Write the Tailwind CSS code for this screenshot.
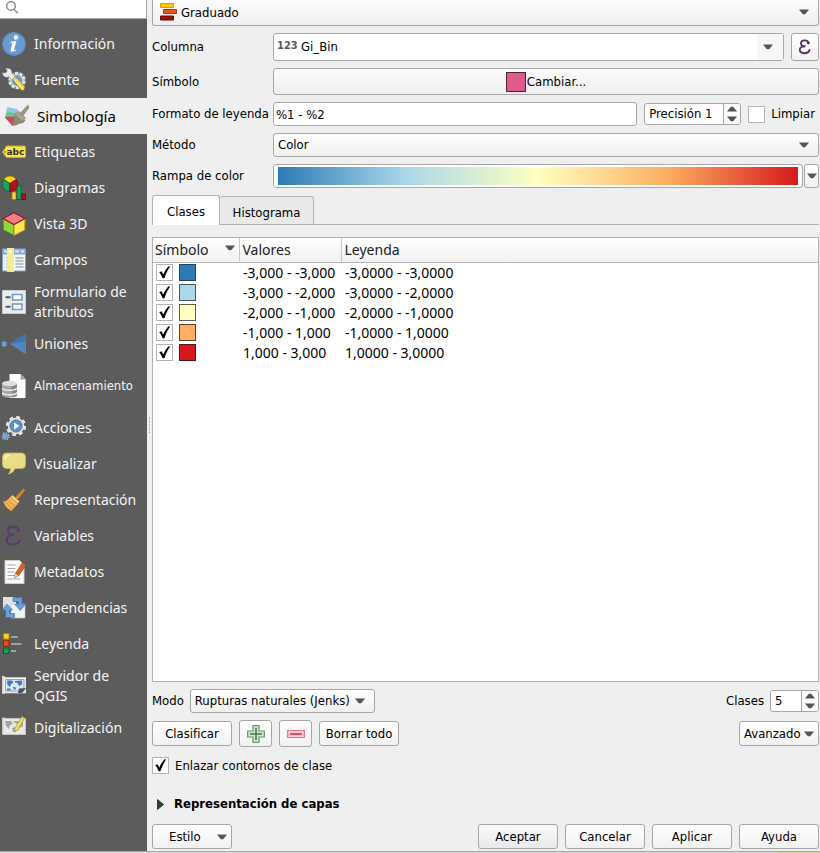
<!DOCTYPE html>
<html lang="es">
<head>
<meta charset="utf-8">
<meta name="viewport" content="width=device-width, initial-scale=1">
<title>Propiedades de la capa</title>
<script src="https://cdn.jsdelivr.net/npm/@tailwindcss/browser@4"></script>
</head>
<body class="flex min-h-screen flex-col bg-[#efefef] font-['DejaVu_Sans_Condensed','Noto_Sans',sans-serif] text-[13px] leading-4 text-black">
<svg class="hidden" aria-hidden="true">
  <symbol id="check" viewBox="0 0 17 17"><path d="M3.200 8.200l2.300-.9 1.800 3.200C8.800 7.200 10.300 4.400 12.600 2.300l1.500.3C11.600 6.200 9.900 9.800 8.400 14.300H6.600C5.800 11.800 4.700 9.900 3.200 8.200z" fill="#000"/></symbol>
  <symbol id="down" viewBox="0 0 10 6"><path d="M0 .5h10L6.200 5.200H3.800z" fill="#555"/></symbol>
  <symbol id="up" viewBox="0 0 10 6"><path d="M0 5.500h10L6.200.8H3.800z" fill="#555"/></symbol>
</svg>

<div class="flex flex-1">
  <!-- Sections -->
  <aside class="flex w-[147px] shrink-0 flex-col bg-[#5c5c5c] font-['Noto_Sans',sans-serif] text-[14px] leading-5 text-[#f4f4f4]">
    <label class="flex h-[19px] items-center border-r border-b border-[#a8a8a8] bg-white pl-[5px]">
      <svg class="h-4 w-4 shrink-0" viewBox="0 0 16 16" fill="none" stroke="#8a8a8a" stroke-width="1.400"><circle cx="6" cy="5" r="4.300"/><path d="M9 8.300l3.800 4"/></svg>
      <input type="search" aria-label="Buscar" class="h-4 w-full min-w-0 bg-transparent text-black outline-none">
    </label>
    <nav class="mt-[7px] flex flex-col">
      <a href="#" class="flex h-9 items-center gap-2 pr-2 pl-[2px]">
        <svg class="h-6 w-6 shrink-0" viewBox="0 0 24 24"><circle cx="12" cy="12" r="11.700" fill="#6a9bd3"/><circle cx="12" cy="12" r="11" fill="none" stroke="#5b8cc5"/><circle cx="14" cy="5.500" r="2.200" fill="#fff"/><path d="M8.500 9.800l6-.9-2.400 8.600c-.2.900.4.900 1.700.1l.3.600c-1.600 1.600-6 2.700-5.400-.4l1.600-6.300c.2-.8-.3-.9-1.800-.8z" fill="#fff"/></svg>
        <span>Información</span></a>
      <a href="#" class="flex h-9 items-center gap-2 pr-2 pl-[2px]">
        <svg class="h-6 w-6 shrink-0" viewBox="0 0 24 24"><circle cx="15" cy="12.500" r="6.500" fill="#6c9bd0"/><circle cx="15" cy="12.500" r="7.500" fill="none" stroke="#e4e4e4" stroke-width="2.400" stroke-dasharray="3.600 1.100"/><circle cx="15" cy="12.500" r="6" fill="none" stroke="#e4e4e4" stroke-width="1.200"/><path d="M.5 4.500c2.500 1 4.500.2 4.500-2L3.500.5C7.500-.5 10.500 1.700 9.800 5.500l3.500 3.300-3 3L6.800 8.900C3.500 10.300.5 8.500.5 4.500z" fill="#ececec" stroke="#777" stroke-width=".5"/><path d="M10.500 11.500l3-2.800 9.500 9.900-.8 3.400-2.600.6z" fill="#eed95f" stroke="#8e7d25" stroke-width=".7"/><path d="M12.500 12l7.500 8.300" stroke="#fff3a0" stroke-width="1"/></svg>
        <span>Fuente</span></a>
      <a href="#" aria-current="page" class="flex h-9 items-center gap-2 bg-[#efefef] pl-[5px] text-[15px] text-black">
        <svg class="h-6 w-6 shrink-0" viewBox="0 0 24 24"><path d="M2.500 3L13 5.500 11 10 1 8.500z" fill="#8cc4ea"/><path d="M1.500 8l9.500 1.500L13 14l-13-.8z" fill="#72c382"/><path d="M-.5 13l12-.5L14 17l-7 4.500z" fill="#cc4566"/><path d="M6 21.500c3.500-2 3-6 3-8.500l3-3.500 8.500 7-3 3c-3-1.500-5.500 3.500-11.500 2z" fill="#8b8873"/><path d="M10 10.500L13.500 7l7 7-3.500 3.500z" fill="#aaa690" stroke="#77745f" stroke-width=".6"/><path d="M15.500 9l7.200-7.800 2 1.600-6.700 8.700z" fill="#9a9781" stroke="#77745f" stroke-width=".5"/></svg>
        <span>Simbología</span></a>
      <a href="#" class="flex h-9 items-center gap-2 pr-2 pl-[2px]">
        <svg class="h-6 w-6 shrink-0" viewBox="0 0 24 24"><path d="M.5 12l4-6H22.500q1 0 1 1v9.500q0 1-1 1H4.500z" fill="#f7e24b" stroke="#c9ac25"/><circle cx="3" cy="12" r=".9" fill="#8a7418"/><text x="4.500" y="15" font-family="DejaVu Sans" font-weight="bold" font-size="9" fill="#333">abc</text></svg>
        <span>Etiquetas</span></a>
      <a href="#" class="flex h-9 items-center gap-2 pr-2 pl-[2px]">
        <svg class="h-6 w-6 shrink-0" viewBox="0 0 24 24"><g stroke-width=".8"><path d="M8 7.500L1.700 3.500A7.500 7.500 0 0 1 14.300 3.500z" fill="#fcd116" stroke="#997a00"/><path d="M8 7.500L1.700 3.500A7.500 7.500 0 0 0 8 15.500z" fill="#17a35a" stroke="#075c2e"/><path d="M8 7.500l6.300-4A7.500 7.500 0 0 1 8 15.500z" fill="#b31217" stroke="#6d0609"/><path d="M10 16h4v7.500h-4z" fill="#fcd04a" stroke="#a07a00"/><path d="M15 10h4v13.500h-4z" fill="#17a35a" stroke="#075c2e"/><path d="M20 18h3.500v5.500H20z" fill="#b31217" stroke="#6d0609"/></g></svg>
        <span>Diagramas</span></a>
      <a href="#" class="flex h-9 items-center gap-2 pr-2 pl-[2px]">
        <svg class="h-6 w-6 shrink-0" viewBox="0 0 24 24" stroke-linejoin="round"><path d="M1 6.500l11 6v11L1.200 18z" fill="#8fd63f" stroke="#478615"/><path d="M23 6.500l-11 6v11L22.800 18z" fill="#fce94f" stroke="#b39415"/><path d="M12 .7l11 5.800-11 6-11-6z" fill="#f08088" stroke="#a5131a" stroke-width="1.300"/></svg>
        <span>Vista 3D</span></a>
      <a href="#" class="flex h-9 items-center gap-2 pr-2 pl-[2px]">
        <svg class="h-6 w-6 shrink-0" viewBox="0 0 24 24"><path d="M.5 1h23v22H.5z" fill="#f2f4f7" stroke="#7da0c8"/><path d="M1 1.500h22v5H1z" fill="#84a9d3"/><path d="M13 3.500h4M19 3.500h3M2 3.500h3" stroke="#d8e6f5" stroke-width="2"/><path d="M2.500 10h19M2.500 13h19M2.500 16h19M2.500 19h19" stroke="#a9aeb5" stroke-width="1.300"/><path d="M3.500 7v15.500M12.500 7v15.500" stroke="#fff" stroke-width="1.500"/><path d="M5 0h7v24H5z" fill="#f3ec90"/><path d="M6.500 3.500h3" stroke="#fff" stroke-width="2"/></svg>
        <span>Campos</span></a>
      <a href="#" class="flex h-12 items-center gap-2 pr-2 pl-[2px]">
        <svg class="h-6 w-6 shrink-0" viewBox="0 0 24 24"><path d="M.5.500h23v23H.5z" fill="#eceded" stroke="#c9cdd2"/><path d="M10.500 4.500h9.500v5.500h-9.500zM10.500 14h9.500v5.500h-9.500z" fill="#fff" stroke="#6f9bcb" stroke-width="1.600"/><path d="M3.500 7.300h5M3.500 16.700h5" stroke="#4c5a68" stroke-width="2"/></svg>
        <span>Formulario de atributos</span></a>
      <a href="#" class="flex h-9 items-center gap-2 pr-2 pl-[2px]">
        <svg class="h-6 w-6 shrink-0" viewBox="0 0 24 24"><circle cx="2" cy="12" r="2.800" fill="#6a9bd3"/><path d="M8 12L24 1.500v21z" fill="#4f86c2"/><path d="M8 12L24 1.500v8z" fill="#3f76b4"/></svg>
        <span>Uniones</span></a>
      <a href="#" class="flex h-12 items-center gap-2 pr-2 pl-[2px]">
        <svg class="h-6 w-6 shrink-0" viewBox="0 0 24 24"><path d="M7.500 0H19l4.500 5v19h-16z" fill="#fff"/><path d="M19 0v5h4.500z" fill="#bbb" stroke="#666" stroke-width=".6"/><path d="M0 10v11c0 3.500 15 3.500 15 0V10z" fill="#a6a6a6"/><path d="M9 10h6v12l-4 1.500z" fill="#858585"/><ellipse cx="7.500" cy="9.500" rx="7.500" ry="2.800" fill="#dedede"/><path d="M0 14c1 3 14 3 15 0M0 18.500c1 3 14 3 15 0" fill="none" stroke="#eee" stroke-width="1.300"/></svg>
        <span class="font-['DejaVu_Sans_Condensed','Noto_Sans',sans-serif] text-[13px]">Almacenamiento</span></a>
      <a href="#" class="flex h-9 items-center gap-2 pr-2 pl-[2px]">
        <svg class="h-6 w-6 shrink-0" viewBox="0 0 24 24"><circle cx="14" cy="10" r="8.300" fill="#e9e9e9"/><circle cx="14" cy="10" r="9" fill="none" stroke="#e9e9e9" stroke-width="2.200" stroke-dasharray="3.800 3.270"/><circle cx="14" cy="10" r="6.200" fill="#5d90c8" stroke="#3e6e9f" stroke-width=".7"/><path d="M12 6.500l5.500 3.500-5.500 3.500z" fill="#fff"/><circle cx="3.300" cy="20.500" r="3" fill="#79a5d4"/><circle cx="3.300" cy="20.500" r="3.700" fill="none" stroke="#9bbcdf" stroke-width="1.200" stroke-dasharray="1.600 1.300"/></svg>
        <span>Acciones</span></a>
      <a href="#" class="flex h-9 items-center gap-2 pr-2 pl-[2px]">
        <svg class="h-6 w-6 shrink-0" viewBox="0 0 24 24"><path d="M4.500 1h15Q23.500 1 23.500 5v7.500q0 4-4 4H13c-1 3-3.500 5-7 5.500 2-1.500 2.600-3.200 2.400-5.500H4.500q-4-.2-4-4V5q0-4 4-4z" fill="#e9de86" stroke="#c8ba55" stroke-width=".8"/><path d="M3 7c.3-3 1.500-3.500 5-3.500" fill="none" stroke="#fffbd0" stroke-width="1.500"/></svg>
        <span>Visualizar</span></a>
      <a href="#" class="flex h-9 items-center gap-2 pr-2 pl-[2px]">
        <svg class="h-6 w-6 shrink-0" viewBox="0 0 24 24"><path d="M13 9.500L21.500.6l1.900 1.500-8 9.700z" fill="#d48a36" stroke="#9a5a12" stroke-width=".6"/><path d="M1 13.500c3 0 5-1.500 7.500-5l8 7.200C13.500 18 12 20 9.500 23 6 21.500 3 18.500 1 13.500z" fill="#f0b661" stroke="#b87420" stroke-width=".7"/><path d="M4 14.500l7 7M6.500 13l7 6" stroke="#d48f38"/><path d="M8.500 9l2-2 7 6.500-2 2z" fill="#f7d79b" stroke="#b87420" stroke-width=".6"/></svg>
        <span>Representación</span></a>
      <a href="#" class="flex h-9 items-center gap-2 pr-2 pl-[2px]">
        <svg class="h-6 w-6 shrink-0" viewBox="0 0 24 24" fill="none" stroke="#5a3c66" stroke-linecap="round"><path d="M16.500 6C15.500 1.800 6 1.800 6 6.600c0 2.900 3 4.200 6.500 4.200-5 0-8 1.600-8 5.200 0 6 11.500 6 13 .3" stroke-width="2.200"/><circle cx="16" cy="6" r="1" stroke-width="1.500"/></svg>
        <span>Variables</span></a>
      <a href="#" class="flex h-9 items-center gap-2 pr-2 pl-[2px]">
        <svg class="h-6 w-6 shrink-0" viewBox="0 0 24 24"><path d="M3 .5h14.500L22 5v18.500H3z" fill="#fafafa" stroke="#ccc"/><path d="M5.500 5h8M5.500 8.500h8M5.500 12h7M5.500 15.500h11M5.500 19h13" stroke="#a7a7a7" stroke-width="1.200"/><path d="M20.500 2.500L24 5l-7.500 11-4 2 .8-4.500z" fill="#d9622b" stroke="#963c12" stroke-width=".6"/><path d="M13.300 13.500l3.200 2.500-4 2z" fill="#f2d3a4"/></svg>
        <span>Metadatos</span></a>
      <a href="#" class="flex h-9 items-center gap-2 pr-2 pl-[2px]">
        <svg class="h-6 w-6 shrink-0" viewBox="0 0 24 24"><path d="M1 1h13v13H1z" fill="#dfe3e8"/><path d="M9 8h14v14H9z" fill="#f1f2f4" stroke="#c7cbd0" stroke-width=".6"/><path d="M11 1.500h9v7h3.500l-5.200 6-5.300-6h3.500V5.500H11z" fill="#6a9fdd" stroke="#3d73b5" stroke-width=".7"/><path d="M12.500 21.500h-9V14H0l5-5.800 5.500 5.800H7.500v3.500h5z" fill="#6a9fdd" stroke="#3d73b5" stroke-width=".7"/></svg>
        <span>Dependencias</span></a>
      <a href="#" class="flex h-9 items-center gap-2 pr-2 pl-[2px]">
        <svg class="h-6 w-6 shrink-0" viewBox="0 0 24 24"><path d="M1.500 1.500h5.500V7H1.500z" fill="#fcd116" stroke="#b08c00"/><path d="M1.500 8.700h5.500v5.500H1.500z" fill="#ef4a12" stroke="#9c2600"/><path d="M1.500 16h5.500v5.500H1.500z" fill="#17a35a" stroke="#075c2e"/><path d="M9 5h7M9 12h10.500M9 19h5" stroke="#a0a0a0" stroke-width="1.800"/></svg>
        <span>Leyenda</span></a>
      <a href="#" class="flex h-12 items-center gap-2 pr-2 pl-[2px]">
        <svg class="h-6 w-6 shrink-0" viewBox="0 0 24 24"><path d="M0 2h3v18H0z" fill="#d8d8d8"/><path d="M1 3.500h23v15.500H1z" fill="#f4f4f4" stroke="#c9c9c9" stroke-width=".8"/><path d="M3.500 5.500h18.500v11.500H3.500z" fill="#d9e6f4" stroke="#7f93a8" stroke-width=".8"/><path d="M5 6.500h5l1.500 2-2.500 1.500-1 3-2.500-2zM13 7l7-.5v4l-3 1.500-1.500-3-2.500-.5zM5 14.500h3l1 2H5zM11 13.500l2-1 1 3h-2z" fill="#4379b5"/><path d="M16 19l1-4.500 7-.5-4 5z" fill="#4a5560"/></svg>
        <span>Servidor de QGIS</span></a>
      <a href="#" class="flex h-9 items-center gap-2 pr-2 pl-[2px]">
        <svg class="h-6 w-6 shrink-0" viewBox="0 0 24 24"><path d="M0 1.500h3v17H0z" fill="#c9c9c9"/><path d="M1 2.500h22.500v16H1z" fill="#e8e8e8" stroke="#ccc" stroke-width=".8"/><path d="M3 5h6l2 3-3 1-1 4-3-3zM11 5h10v5l-3 2-2-4-3-1zM10 12l3-1 1 5h-3z" fill="#a3a6a3"/><path d="M20 .5l2.500 1.500L16 14l-3.500 2 .5-4z" fill="#efe069" stroke="#a79522" stroke-width=".7"/></svg>
        <span>Digitalización</span></a>
    </nav>
  </aside>

  <!-- Symbology panel -->
  <main class="relative flex min-w-0 flex-1 flex-col pr-px pl-[5px]">
    <div class="absolute top-[417px] left-[2px] h-4 w-px border-l border-dotted border-[#aaa]"></div>

    <div class="grid grid-cols-[114px_minmax(0,1fr)] items-center gap-[7px]">
      <div class="relative col-span-2">
        <select aria-label="Tipo de simbología" class="block h-[26px] w-full appearance-none rounded-b-[3px] border border-t-0 border-[#a6a6a6] bg-linear-to-b from-[#fbfbfb] to-[#f0f0f0] pl-7"><option>Graduado</option></select>
        <svg class="pointer-events-none absolute top-[3px] left-2 h-[18px] w-[18px]" viewBox="0 0 18 18"><path d="M.5.500h13v4H.5z" fill="#ffc800" stroke="#d99c00"/><path d="M3.500 6.500h13v4h-13z" fill="#f0530f" stroke="#b63500"/><path d="M.5 13h13v4H.5z" fill="#9c1006" stroke="#6e0500"/></svg>
        <svg class="pointer-events-none absolute top-[9px] right-[10px] h-[6px] w-[10px]"><use href="#down"/></svg>
      </div>

      <label for="columna">Columna</label>
      <div class="flex gap-[7px]">
        <div class="relative min-w-0 flex-1">
          <select id="columna" class="block h-7 w-full appearance-none rounded-[3px] border border-[#a6a6a6] bg-white pl-[27px]"><option>Gi_Bin</option></select>
          <span class="pointer-events-none absolute top-[5px] left-1 text-[11px] font-bold text-[#5a5a5a]">123</span>
          <span class="pointer-events-none absolute top-px right-px flex h-[26px] w-[26px] items-center bg-[#f6f6f6] pl-[6px]"><svg class="h-[6px] w-[10px]"><use href="#down"/></svg></span>
        </div>
        <button type="button" aria-label="Expresión" class="flex h-7 w-7 items-center justify-center rounded-[3px] border border-[#a6a6a6] bg-linear-to-b from-white to-[#f2f2f2]">
          <svg class="h-4 w-4" viewBox="0 0 16 16" fill="none" stroke="#54395f" stroke-linecap="round"><path d="M11.500 4C10.800.4 4 .5 4 4.200c0 2 2 3 4.500 3-3.300 0-5.700 1-5.700 3.600 0 4.500 8.700 4.500 9.700.2" stroke-width="1.900"/><circle cx="11.300" cy="4.100" r=".7" stroke-width="1.300"/></svg>
        </button>
      </div>

      <span id="simbolo">Símbolo</span>
      <button type="button" aria-describedby="simbolo" class="flex h-[27px] items-center justify-center gap-px rounded-[3px] border border-[#a6a6a6] bg-linear-to-b from-[#fcfcfc] to-[#eeeeee]">
        <span class="h-5 w-5 border border-[#4c2434] bg-[#e0598b]"></span>Cambiar...
      </button>

      <label for="formato" class="whitespace-nowrap">Formato de leyenda</label>
      <div class="flex items-center gap-[7px]">
        <input id="formato" type="text" value="%1 - %2" class="h-6 min-w-0 flex-1 rounded-[3px] border border-[#a6a6a6] bg-white px-[2px]">
        <div class="flex h-[22px] w-[97px] overflow-hidden rounded-[3px] border border-[#a6a6a6] bg-white">
          <input type="text" role="spinbutton" aria-label="Precisión" aria-valuenow="1" value="Precisión 1" class="min-w-0 flex-1 pl-1">
          <div class="flex w-[17px] flex-col border-l border-[#a6a6a6] bg-[#fafafa]">
            <button type="button" aria-label="Aumentar precisión" class="flex flex-1 items-center justify-center"><svg class="h-[6px] w-[10px]"><use href="#up"/></svg></button>
            <button type="button" aria-label="Reducir precisión" class="flex flex-1 items-center justify-center"><svg class="h-[6px] w-[10px]"><use href="#down"/></svg></button>
          </div>
        </div>
        <label class="flex items-center gap-[6px] pr-1"><input type="checkbox" class="h-[17px] w-[17px] appearance-none border border-[#b4b4b4] bg-white">Limpiar</label>
      </div>

      <label for="metodo">Método</label>
      <div class="relative">
        <select id="metodo" class="block h-6 w-full appearance-none rounded-[3px] border border-[#a6a6a6] bg-linear-to-b from-white to-[#efefef] pl-1"><option>Color</option></select>
        <svg class="pointer-events-none absolute top-[9px] right-[10px] h-[6px] w-[10px]"><use href="#down"/></svg>
      </div>

      <span id="rampa">Rampa de color</span>
      <div class="flex gap-px">
        <button type="button" aria-labelledby="rampa" class="flex h-6 min-w-0 flex-1 items-center rounded-[3px] border border-[#a6a6a6] bg-white px-1"><span class="h-[18px] w-full [background-image:linear-gradient(90deg,#2c7bb6,#abd9e9_25%,#ffffbf_50%,#fdae61_75%,#d7191c)]"></span></button>
        <button type="button" aria-label="Rampas disponibles" class="flex h-6 w-[15px] items-center justify-center rounded-[3px] border border-[#a6a6a6] bg-linear-to-b from-white to-[#f2f2f2]"><svg class="h-[6px] w-[10px] shrink-0"><use href="#down"/></svg></button>
      </div>
    </div>

    <div role="tablist" class="mt-[7px] flex h-[30px] items-end border-b border-[#b0b0b0]">
      <button type="button" role="tab" aria-selected="true" class="-mb-px flex h-[30px] w-[68px] items-center justify-center rounded-t-[3px] border border-b-0 border-[#b0b0b0] bg-white pt-[2px]">Clases</button>
      <button type="button" role="tab" aria-selected="false" class="flex h-7 w-[94px] items-center justify-center rounded-t-[3px] border border-b-0 border-l-0 border-[#b8b8b8] bg-[#e9e9e9] pt-1">Histograma</button>
    </div>

    <div class="mt-3 flex-1 border border-[#b0b0b0] bg-white font-['Noto_Sans',sans-serif] text-[14px] leading-5">
      <table class="w-full table-fixed border-collapse text-left">
        <colgroup><col class="w-[86px]"><col class="w-[102px]"><col></colgroup>
        <thead class="bg-linear-to-b from-white to-[#f1f1f1] text-[#222]">
          <tr class="h-6 border-b border-[#b8b8b8]">
            <th class="border-r border-[#c8c8c8] p-0 pl-[2px] font-normal"><div class="flex items-center justify-between pr-1">Símbolo<svg class="mb-1 h-[6px] w-[10px]"><use href="#down"/></svg></div></th>
            <th class="border-r border-[#c8c8c8] p-0 pl-[3px] font-normal">Valores</th>
            <th class="p-0 pl-[3px] font-normal">Leyenda</th>
          </tr>
        </thead>
        <tbody class="whitespace-nowrap">
          <tr class="h-5"><td class="p-0 pl-[3px]"><div class="flex gap-[6px]"><label class="grid h-[17px] w-[17px]"><input type="checkbox" checked aria-label="Clase 1" class="peer col-start-1 row-start-1 h-[17px] w-[17px] appearance-none border border-[#b4b4b4] bg-white"><svg class="pointer-events-none invisible col-start-1 row-start-1 h-[17px] w-[17px] peer-checked:visible"><use href="#check"/></svg></label><span class="h-[17px] w-[17px] border border-[#26435a] bg-[#2c7bb6]"></span></div></td><td class="p-0 pl-1">-3,000 - -3,000</td><td class="p-0 pl-1">-3,0000 - -3,0000</td></tr>
          <tr class="h-5"><td class="p-0 pl-[3px]"><div class="flex gap-[6px]"><label class="grid h-[17px] w-[17px]"><input type="checkbox" checked aria-label="Clase 2" class="peer col-start-1 row-start-1 h-[17px] w-[17px] appearance-none border border-[#b4b4b4] bg-white"><svg class="pointer-events-none invisible col-start-1 row-start-1 h-[17px] w-[17px] peer-checked:visible"><use href="#check"/></svg></label><span class="h-[17px] w-[17px] border border-[#44565e] bg-[#abd9e9]"></span></div></td><td class="p-0 pl-1">-3,000 - -2,000</td><td class="p-0 pl-1">-3,0000 - -2,0000</td></tr>
          <tr class="h-5"><td class="p-0 pl-[3px]"><div class="flex gap-[6px]"><label class="grid h-[17px] w-[17px]"><input type="checkbox" checked aria-label="Clase 3" class="peer col-start-1 row-start-1 h-[17px] w-[17px] appearance-none border border-[#b4b4b4] bg-white"><svg class="pointer-events-none invisible col-start-1 row-start-1 h-[17px] w-[17px] peer-checked:visible"><use href="#check"/></svg></label><span class="h-[17px] w-[17px] border border-[#5e5e48] bg-[#ffffbf]"></span></div></td><td class="p-0 pl-1">-2,000 - -1,000</td><td class="p-0 pl-1">-2,0000 - -1,0000</td></tr>
          <tr class="h-5"><td class="p-0 pl-[3px]"><div class="flex gap-[6px]"><label class="grid h-[17px] w-[17px]"><input type="checkbox" checked aria-label="Clase 4" class="peer col-start-1 row-start-1 h-[17px] w-[17px] appearance-none border border-[#b4b4b4] bg-white"><svg class="pointer-events-none invisible col-start-1 row-start-1 h-[17px] w-[17px] peer-checked:visible"><use href="#check"/></svg></label><span class="h-[17px] w-[17px] border border-[#5e4430] bg-[#fdae61]"></span></div></td><td class="p-0 pl-1">-1,000 - 1,000</td><td class="p-0 pl-1">-1,0000 - 1,0000</td></tr>
          <tr class="h-5"><td class="p-0 pl-[3px]"><div class="flex gap-[6px]"><label class="grid h-[17px] w-[17px]"><input type="checkbox" checked aria-label="Clase 5" class="peer col-start-1 row-start-1 h-[17px] w-[17px] appearance-none border border-[#b4b4b4] bg-white"><svg class="pointer-events-none invisible col-start-1 row-start-1 h-[17px] w-[17px] peer-checked:visible"><use href="#check"/></svg></label><span class="h-[17px] w-[17px] border border-[#5a1416] bg-[#d7191c]"></span></div></td><td class="p-0 pl-1">1,000 - 3,000</td><td class="p-0 pl-1">1,0000 - 3,0000</td></tr>
        </tbody>
      </table>
    </div>

    <div class="mt-[7px] flex items-center justify-between">
      <div class="flex items-center gap-[6px]">
        <label for="modo">Modo</label>
        <div class="relative">
          <select id="modo" class="block h-6 w-[185px] appearance-none rounded-[3px] border border-[#a6a6a6] bg-linear-to-b from-white to-[#efefef] pl-1"><option>Rupturas naturales (Jenks)</option></select>
          <svg class="pointer-events-none absolute top-[9px] right-[10px] h-[6px] w-[10px]"><use href="#down"/></svg>
        </div>
      </div>
      <div class="flex items-center gap-[6px]">
        <label for="clases">Clases</label>
        <div class="flex h-[22px] w-[49px] overflow-hidden rounded-[3px] border border-[#a6a6a6] bg-white">
          <input id="clases" type="text" inputmode="numeric" role="spinbutton" aria-valuenow="5" value="5" class="min-w-0 flex-1 pl-1">
          <div class="flex w-[17px] flex-col border-l border-[#a6a6a6] bg-[#fafafa]">
            <button type="button" aria-label="Más clases" class="flex flex-1 items-center justify-center"><svg class="h-[6px] w-[10px]"><use href="#up"/></svg></button>
            <button type="button" aria-label="Menos clases" class="flex flex-1 items-center justify-center"><svg class="h-[6px] w-[10px]"><use href="#down"/></svg></button>
          </div>
        </div>
      </div>
    </div>

    <div class="mt-[7px] flex items-center gap-[7px]">
      <button type="button" class="h-[25px] w-20 rounded-[3px] border border-[#a6a6a6] bg-linear-to-b from-white to-[#f1f1f1]">Clasificar</button>
      <button type="button" aria-label="Añadir clase" class="flex h-[27px] w-[33px] items-center justify-center rounded-[3px] border border-[#a6a6a6] bg-linear-to-b from-white to-[#f1f1f1]"><svg class="h-[18px] w-[18px]" viewBox="0 0 18 18"><path d="M6 .7h6V6h5.300v6H12v5.300H6V12H.7V6H6z" fill="#d5e9d5" stroke="#5d9a63" stroke-width="1.200"/><path d="M9 3v12M3 9h12" stroke="#5d8f62" stroke-width="2"/></svg></button>
      <button type="button" aria-label="Eliminar clase" class="flex h-[27px] w-[33px] items-center justify-center rounded-[3px] border border-[#a6a6a6] bg-linear-to-b from-white to-[#f1f1f1]"><svg class="h-[18px] w-[18px]" viewBox="0 0 18 18"><path d="M.7 5.500h16.600v7H.7z" fill="#fbd3d6" stroke="#e8707a" stroke-width="1.200"/><path d="M3 9h12" stroke="#e34f5b" stroke-width="2"/></svg></button>
      <button type="button" class="h-[25px] w-20 rounded-[3px] border border-[#a6a6a6] bg-linear-to-b from-white to-[#f1f1f1] whitespace-nowrap">Borrar todo</button>
      <button type="button" class="ml-auto flex h-[25px] w-20 items-center justify-between rounded-[3px] border border-[#a6a6a6] bg-linear-to-b from-white to-[#f1f1f1] px-1">Avanzado<svg class="h-[6px] w-[10px]"><use href="#down"/></svg></button>
    </div>

    <label class="mt-[10px] flex items-center gap-[6px]">
      <span class="grid h-[17px] w-[17px]"><input type="checkbox" checked class="peer col-start-1 row-start-1 h-[17px] w-[17px] appearance-none border border-[#b4b4b4] bg-white"><svg class="pointer-events-none invisible col-start-1 row-start-1 h-[17px] w-[17px] peer-checked:visible"><use href="#check"/></svg></span>
      Enlazar contornos de clase
    </label>

    <button type="button" aria-expanded="false" class="mt-[22px] flex h-4 items-center gap-[10px] self-start pl-[5px] font-bold"><svg class="h-[11px] w-[7px]" viewBox="0 0 7 11"><path d="M.5.500L6.500 5.500.5 10.500z" fill="#3c3c3c" stroke="#222" stroke-width=".8"/></svg>Representación de capas</button>

    <div class="mt-3 mb-[2px] flex gap-[7px]">
      <button type="button" class="mr-auto flex h-[25px] w-20 items-center justify-between rounded-[3px] border border-[#a6a6a6] bg-linear-to-b from-white to-[#f1f1f1] pr-1 pl-4">Estilo<svg class="h-[6px] w-[10px]"><use href="#down"/></svg></button>
      <button type="button" class="h-[25px] w-20 rounded-[3px] border border-[#a6a6a6] bg-linear-to-b from-[#fafafa] to-[#e9e9e9]">Aceptar</button>
      <button type="button" class="h-[25px] w-20 rounded-[3px] border border-[#a6a6a6] bg-linear-to-b from-white to-[#f1f1f1]">Cancelar</button>
      <button type="button" class="h-[25px] w-20 rounded-[3px] border border-[#a6a6a6] bg-linear-to-b from-white to-[#f1f1f1]">Aplicar</button>
      <button type="button" class="h-[25px] w-20 rounded-[3px] border border-[#a6a6a6] bg-linear-to-b from-white to-[#f1f1f1]">Ayuda</button>
    </div>
  </main>
</div>
<div class="flex h-[2px] justify-end border-t border-[#a9a9a9] bg-[#d4d4d4]"><span class="w-[42px] bg-[#d9cf93]"></span></div>
</body>
</html>
